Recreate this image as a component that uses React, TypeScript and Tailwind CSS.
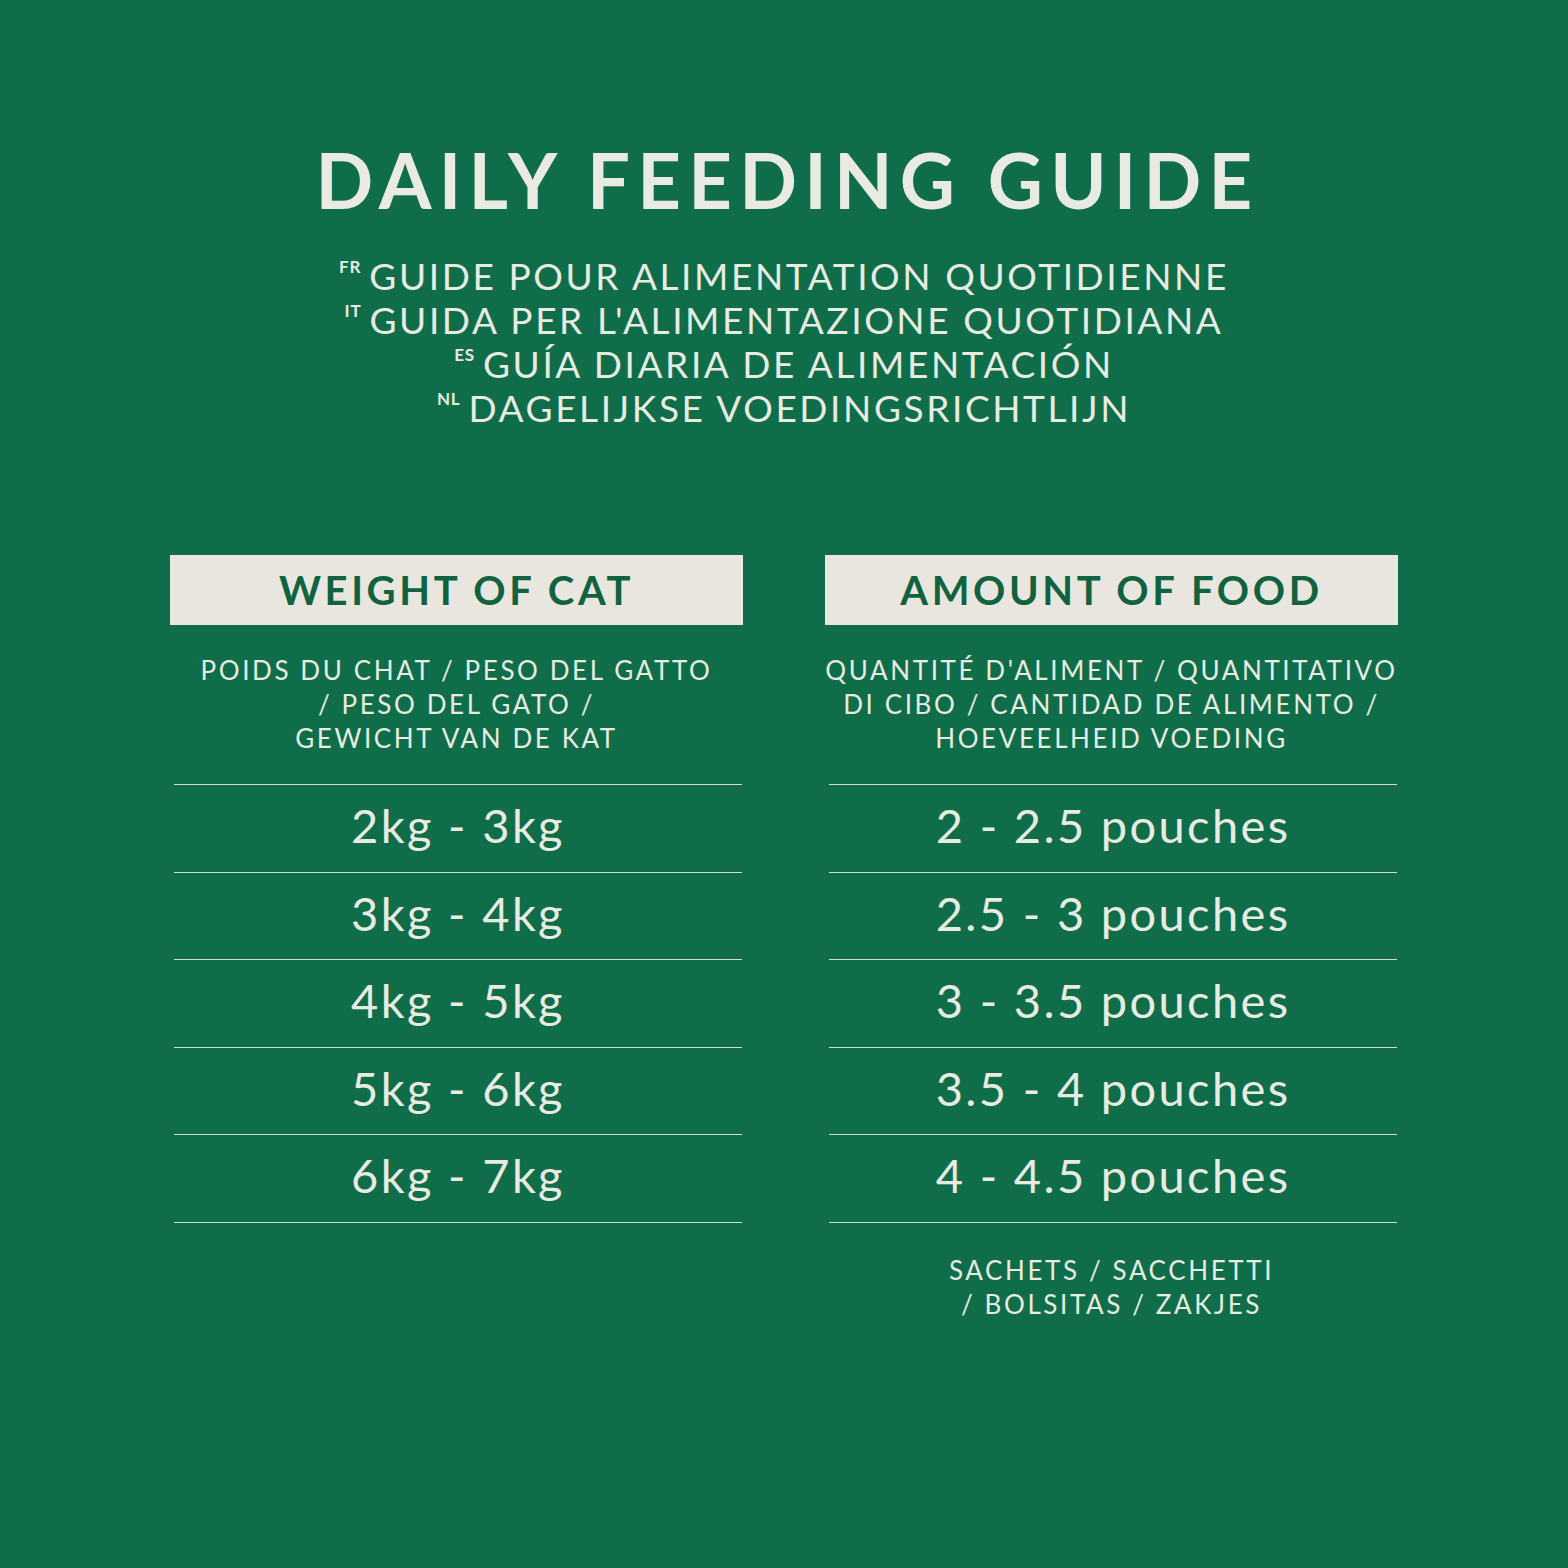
const subtitles = [
  { code: 'FR', text: 'GUIDE POUR ALIMENTATION QUOTIDIENNE' },
  { code: 'IT', text: "GUIDA PER L'ALIMENTAZIONE QUOTIDIANA" },
  { code: 'ES', text: 'GUÍA DIARIA DE ALIMENTACIÓN' },
  { code: 'NL', text: 'DAGELIJKSE VOEDINGSRICHTLIJN' },
]

const weights = ['2kg - 3kg', '3kg - 4kg', '4kg - 5kg', '5kg - 6kg', '6kg - 7kg']
const amounts = [
  '2 - 2.5 pouches',
  '2.5 - 3 pouches',
  '3 - 3.5 pouches',
  '3.5 - 4 pouches',
  '4 - 4.5 pouches',
]

function Column({
  title,
  label,
  rows,
  footer,
}: {
  title: string
  label: string[]
  rows: string[]
  footer?: string[]
}) {
  return (
    <div className="flex flex-col">
      <div className="flex h-[70px] items-center justify-center bg-[#e9e6e0]">
        <span className="text-[40px] font-bold leading-none tracking-[0.09em] text-[#11623f]">
          {title}
        </span>
      </div>
      <div className="flex h-[159px] flex-col items-center justify-center pb-[2px] text-[26px] leading-[34px] tracking-[0.1em] text-[#e7ebe1]">
        {label.map((l) => (
          <div key={l}>{l}</div>
        ))}
      </div>
      <div className="ml-[4px] mr-[1px] border-t border-[#cfe0d2]">
        {rows.map((r) => (
          <div
            key={r}
            className="flex h-[87.6px] items-center justify-center border-b border-[#cfe0d2] pb-[6px] text-[47px] tracking-[0.05em] text-[#e7ebe1]"
          >
            {r}
          </div>
        ))}
      </div>
      {footer && (
        <div className="mt-[30px] flex flex-col items-center text-[26px] leading-[34px] tracking-[0.1em] text-[#e7ebe1]">
          {footer.map((l) => (
            <div key={l}>{l}</div>
          ))}
        </div>
      )}
    </div>
  )
}

export default function App() {
  return (
    <div className="flex h-[1568px] w-[1568px] flex-col items-center bg-[#106d49] font-['Lato',sans-serif] text-[#e7ebe1]">
      {/* --- title --- */}
      <h1 className="mt-[142px] pl-[7px] text-[76px] font-bold leading-none tracking-[0.095em] text-[#e9ebe2]">
        DAILY FEEDING GUIDE
      </h1>

      <div className="mt-[36px] flex flex-col items-center text-[37px] font-normal leading-[44px] tracking-[0.07em]">
        {subtitles.map((s) => (
          <div key={s.code} className="flex items-start">
            <span className="mr-[8px] mt-[4px] text-[17px] font-bold leading-none tracking-[0.05em]">
              {s.code}
            </span>
            <span>{s.text}</span>
          </div>
        ))}
      </div>

      {/* --- table --- */}
      <div className="mt-[125px] grid w-[1228px] grid-cols-2 gap-[82px]">
        <Column
          title="WEIGHT OF CAT"
          label={['POIDS DU CHAT / PESO DEL GATTO', '/ PESO DEL GATO /', 'GEWICHT VAN DE KAT']}
          rows={weights}
        />
        <Column
          title="AMOUNT OF FOOD"
          label={[
            "QUANTITÉ D'ALIMENT / QUANTITATIVO",
            'DI CIBO / CANTIDAD DE ALIMENTO /',
            'HOEVEELHEID VOEDING',
          ]}
          rows={amounts}
          footer={['SACHETS / SACCHETTI', '/ BOLSITAS / ZAKJES']}
        />
      </div>
    </div>
  )
}
